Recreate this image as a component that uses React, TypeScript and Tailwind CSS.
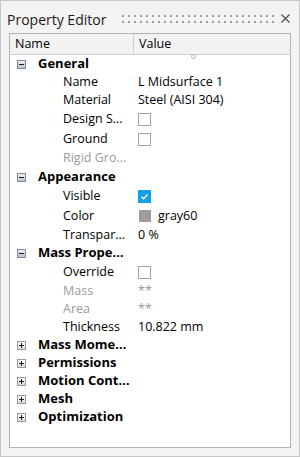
import React from "react";

type Row =
  | { kind: "group"; label: string; open: boolean }
  | { kind: "text"; label: string; value: string; muted?: boolean; tall?: boolean }
  | { kind: "check"; label: string; checked?: boolean }
  | { kind: "color"; label: string; value: string };

const rows: Row[] = [
  { kind: "group", label: "General", open: true },
  { kind: "text", label: "Name", value: "L Midsurface 1" },
  { kind: "text", label: "Material", value: "Steel (AISI 304)" },
  { kind: "check", label: "Design S…" },
  { kind: "check", label: "Ground" },
  { kind: "text", label: "Rigid Gro…", value: "", muted: true, tall: true },
  { kind: "group", label: "Appearance", open: true },
  { kind: "check", label: "Visible", checked: true },
  { kind: "color", label: "Color", value: "gray60" },
  { kind: "text", label: "Transpar…", value: "0 %" },
  { kind: "group", label: "Mass Prope…", open: true },
  { kind: "check", label: "Override" },
  { kind: "text", label: "Mass", value: "**", muted: true },
  { kind: "text", label: "Area", value: "**", muted: true },
  { kind: "text", label: "Thickness", value: "10.822 mm" },
  { kind: "group", label: "Mass Mome…", open: false },
  { kind: "group", label: "Permissions", open: false },
  { kind: "group", label: "Motion Cont…", open: false },
  { kind: "group", label: "Mesh", open: false },
  { kind: "group", label: "Optimization", open: false },
];

function Expander({ open }: { open: boolean }) {
  return (
    <div
      className={
        "w-[9px] h-[9px] border flex items-center justify-center " +
        (open
          ? "border-[#7f8a99] bg-gradient-to-b from-[#eef1f5] to-[#b9c2cf]"
          : "border-[#9a9a9a] bg-gradient-to-b from-white to-[#dcdcdc]")
      }
    >
      <svg width="7" height="7" viewBox="0 0 7 7">
        <line x1="1" y1="3.5" x2="6" y2="3.5" stroke="#1c1c1c" strokeWidth="1" />
        {!open && <line x1="3.5" y1="1" x2="3.5" y2="6" stroke="#1c1c1c" strokeWidth="1" />}
      </svg>
    </div>
  );
}

function Check({ checked }: { checked?: boolean }) {
  if (checked)
    return (
      <div className="w-[13px] h-[13px] bg-[#12a0e6] flex items-center justify-center">
        <svg width="9" height="9" viewBox="0 0 9 9">
          <path d="M1.5 4.8 L3.6 6.8 L7.6 2.4" fill="none" stroke="white" strokeWidth="1.4" />
        </svg>
      </div>
    );
  return <div className="w-[13px] h-[13px] border border-[#a3a3a3] bg-white" />;
}

function Grip() {
  const dots = Array.from({ length: 26 });
  return (
    <div className="flex flex-col gap-[4px]">
      {[0, 1].map((r) => (
        <div key={r} className="flex gap-[4px]">
          {dots.map((_, i) => (
            <span key={i} className="w-[2px] h-[2px] bg-[#a0a0a0]" />
          ))}
        </div>
      ))}
    </div>
  );
}

export default function App() {
  return (
    <div
      className="w-[300px] h-[457px] border border-[#c8c8c8] bg-[#f3f3f3] flex flex-col text-[12.5px] text-black"
      style={{ fontFamily: '"Open Sans", "Noto Sans", sans-serif' }}
    >
      <div className="h-[32px] flex items-center pl-[6px]">
        <span className="w-[115px] text-[14px] text-[#1a1a1a] pt-[4px] whitespace-nowrap">Property Editor</span>
        <div className="mt-[4px]">
          <Grip />
        </div>
        <svg className="ml-[7px] mt-[2px]" width="9" height="9" viewBox="0 0 9 9">
          <path d="M0.5 0.5 L8.5 8.5 M8.5 0.5 L0.5 8.5" stroke="#4a4a4a" strokeWidth="1.1" />
        </svg>
      </div>
      <div className="ml-[8px] w-[282px] h-[415px] border border-[#b4b4b4] bg-white flex flex-col relative">
        <div className="h-[21px] flex bg-[#f2f2f2] border-b border-[#d0d0d0]">
          <div className="w-[124px] pl-[5px] border-r border-[#d0d0d0] flex items-center">Name</div>
          <div className="pl-[5px] flex items-center">Value</div>
        </div>
        <span className="absolute left-[181px] top-[20px] w-[5px] h-[5px] rounded-full border border-[#b0b0b0] bg-white" />
        {rows.map((row, i) => {
          if (row.kind === "group")
            return (
              <div key={i} className="h-[18px] flex items-center">
                <div className="w-[28px] pl-[7px]">
                  <Expander open={row.open} />
                </div>
                <span className="font-bold text-[13px] whitespace-nowrap">{row.label}</span>
              </div>
            );
          const h =
            row.kind === "check" || row.kind === "color"
              ? "h-[20px]"
              : row.kind === "text" && row.tall
              ? "h-[19px]"
              : "h-[18px]";
          return (
            <div key={i} className={h + " flex items-center"}>
              <div
                className={
                  "w-[124px] pl-[53px] whitespace-nowrap overflow-hidden " +
                  (row.kind === "text" && row.muted ? "text-[#9a9a9a]" : "")
                }
              >
                {row.label}
              </div>
              <div className="pl-[4px] flex items-center">
                {row.kind === "text" && (
                  <span className={row.muted ? "text-[#9a9a9a]" : ""}>{row.value}</span>
                )}
                {row.kind === "check" && <Check checked={row.checked} />}
                {row.kind === "color" && (
                  <>
                    <span className="ml-[1px] w-[12px] h-[12px] bg-[#9d9d9d]" />
                    <span className="ml-[7px]">{row.value}</span>
                  </>
                )}
              </div>
            </div>
          );
        })}
      </div>
    </div>
  );
}
